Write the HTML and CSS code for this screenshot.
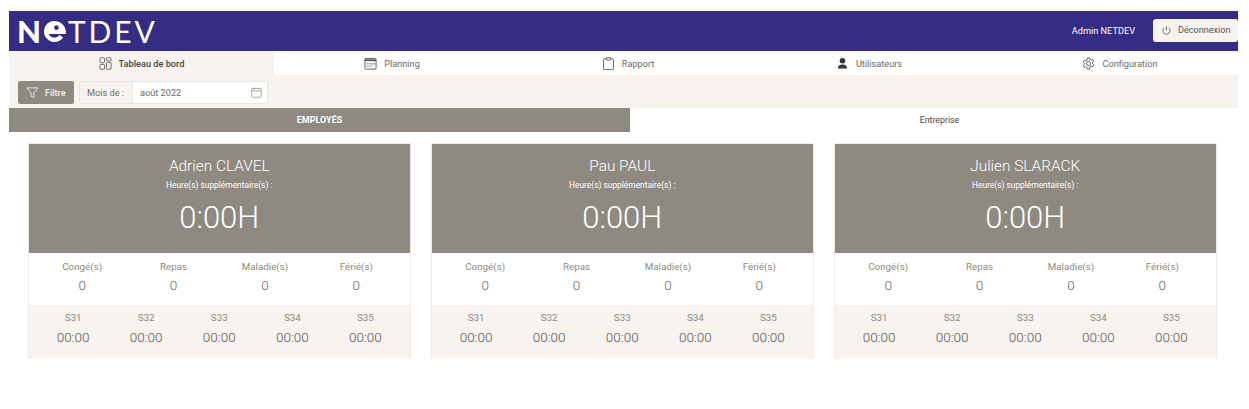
FILE: index.html
```html
<!DOCTYPE html>
<html lang="fr">
<head>
<meta charset="utf-8">
<title>NETDEV</title>
<link rel="stylesheet" href="styles.css">
</head>
<body>
<div class="app">
  <header class="topbar">
    <div class="logo"><span class="logo-n">N</span><svg class="logo-e" viewBox="0 0 24 24" aria-hidden="true"><path d="M12 1a11 11 0 1 0 9 17.3l-3.9-2.6A6.4 6.4 0 0 1 6 14.5h17.6c.3-1 .4-1.8.4-2.5A12 12 0 0 0 12 1z" fill="#fff"/><circle cx="14" cy="8" r="2.4" fill="#352c84"/></svg><span class="logo-rest">TDEV</span></div>
    <div class="user">
      <span class="user-name">Admin NETDEV</span>
      <button class="logout"><svg class="ico-sm" viewBox="0 0 16 16" fill="none" stroke="#444" stroke-width="1.1"><path d="M8 2v6"/><path d="M5 4a5.2 5.2 0 1 0 6 0"/></svg>Déconnexion</button>
    </div>
  </header>
  <nav class="nav">
    <a class="nav-item active"><svg class="ico" viewBox="0 0 14 14" fill="none" stroke="#555" stroke-width=".9"><rect x="1" y=".8" width="5" height="5.4" rx="1.4"/><rect x="8" y=".8" width="5" height="3.4" rx="1"/><rect x="1" y="8" width="5" height="5.2" rx="1"/><rect x="8" y="5.8" width="5" height="7.4" rx="1"/></svg>Tableau de bord</a>
    <a class="nav-item"><svg class="ico" viewBox="0 0 14 14" fill="none" stroke="#555"><rect x="1" y="1.5" width="12" height="11.5" rx="1"/><path d="M1 3.5h12" stroke-width="2"/><path d="M3.5 6.5v4M5.5 6.5v4M7.5 6.5v4M9.5 6.5v3M11 6.5v2" stroke-dasharray="1 .6" stroke-width=".9"/></svg>Planning</a>
    <a class="nav-item"><svg class="ico" viewBox="0 0 14 14" fill="none" stroke="#444" stroke-width=".9"><path d="M4.5 2H2.5a.8.8 0 0 0-.8.8v10a.8.8 0 0 0 .8.8h9a.8.8 0 0 0 .8-.8v-10a.8.8 0 0 0-.8-.8H9.5"/><rect x="4.7" y=".6" width="4.6" height="2.6" rx=".6"/></svg>Rapport</a>
    <a class="nav-item"><svg class="ico" viewBox="0 0 14 14" fill="#333"><circle cx="7" cy="4" r="3"/><path d="M2 12.5c0-2.8 2-4.3 5-4.3s5 1.5 5 4.3z"/></svg>Utilisateurs</a>
    <a class="nav-item shifted"><svg class="ico" viewBox="0 0 14 14" fill="none" stroke="#444" stroke-width=".9"><path d="M5.8 1h2.4l.4 1.7 1.3.6 1.6-.8 1.2 2-1.3 1.2v1.5l1.3 1.2-1.2 2-1.6-.6-1.3.7L8.2 13H5.8l-.4-1.7-1.3-.7-1.6.6-1.2-2 1.3-1.2V6.5L1.3 5.3l1.2-2 1.6.8 1.3-.6z"/><circle cx="7" cy="7" r="2.2"/></svg>Configuration</a>
  </nav>
  <div class="toolbar">
    <button class="filter"><svg class="ico" viewBox="0 0 14 14" fill="none" stroke="#f2f0ec" stroke-width=".9"><path d="M1 2h12L8.5 7.5V12.5L5.5 11V7.5z"/></svg>Filtre</button>
    <div class="month">
      <span class="month-label">Mois de :</span>
      <span class="month-value">août 2022<svg class="ico-cal" viewBox="0 0 12 12" fill="none" stroke="#8e8a81" stroke-width=".8"><rect x=".8" y="1.6" width="10.4" height="9.6" rx="1"/><path d="M.8 4.2h10.4M3.4.6v2M8.6.6v2"/></svg></span>
    </div>
  </div>
  <div class="tabs">
    <div class="tab tab-on">EMPLOYÉS</div>
    <div class="tab tab-off">Entreprise</div>
  </div>
  <main class="cards">
    <section class="card">
      <div class="card-head">
        <div class="name">Adrien CLAVEL</div>
        <div class="extra">Heure(s) supplémentaire(s) :</div>
        <div class="hours">0:00H</div>
      </div>
      <div class="stats">
        <div class="cell"><span class="lab">Congé(s)</span><span class="num">0</span></div>
        <div class="cell"><span class="lab">Repas</span><span class="num">0</span></div>
        <div class="cell"><span class="lab">Maladie(s)</span><span class="num">0</span></div>
        <div class="cell"><span class="lab">Férié(s)</span><span class="num">0</span></div>
      </div>
      <div class="weeks">
        <div class="cell"><span class="lab">S31</span><span class="time">00:00</span></div>
        <div class="cell"><span class="lab">S32</span><span class="time">00:00</span></div>
        <div class="cell"><span class="lab">S33</span><span class="time">00:00</span></div>
        <div class="cell"><span class="lab">S34</span><span class="time">00:00</span></div>
        <div class="cell"><span class="lab">S35</span><span class="time">00:00</span></div>
      </div>
    </section>
    <section class="card">
      <div class="card-head">
        <div class="name">Pau PAUL</div>
        <div class="extra">Heure(s) supplémentaire(s) :</div>
        <div class="hours">0:00H</div>
      </div>
      <div class="stats">
        <div class="cell"><span class="lab">Congé(s)</span><span class="num">0</span></div>
        <div class="cell"><span class="lab">Repas</span><span class="num">0</span></div>
        <div class="cell"><span class="lab">Maladie(s)</span><span class="num">0</span></div>
        <div class="cell"><span class="lab">Férié(s)</span><span class="num">0</span></div>
      </div>
      <div class="weeks">
        <div class="cell"><span class="lab">S31</span><span class="time">00:00</span></div>
        <div class="cell"><span class="lab">S32</span><span class="time">00:00</span></div>
        <div class="cell"><span class="lab">S33</span><span class="time">00:00</span></div>
        <div class="cell"><span class="lab">S34</span><span class="time">00:00</span></div>
        <div class="cell"><span class="lab">S35</span><span class="time">00:00</span></div>
      </div>
    </section>
    <section class="card">
      <div class="card-head">
        <div class="name">Julien SLARACK</div>
        <div class="extra">Heure(s) supplémentaire(s) :</div>
        <div class="hours">0:00H</div>
      </div>
      <div class="stats">
        <div class="cell"><span class="lab">Congé(s)</span><span class="num">0</span></div>
        <div class="cell"><span class="lab">Repas</span><span class="num">0</span></div>
        <div class="cell"><span class="lab">Maladie(s)</span><span class="num">0</span></div>
        <div class="cell"><span class="lab">Férié(s)</span><span class="num">0</span></div>
      </div>
      <div class="weeks">
        <div class="cell"><span class="lab">S31</span><span class="time">00:00</span></div>
        <div class="cell"><span class="lab">S32</span><span class="time">00:00</span></div>
        <div class="cell"><span class="lab">S33</span><span class="time">00:00</span></div>
        <div class="cell"><span class="lab">S34</span><span class="time">00:00</span></div>
        <div class="cell"><span class="lab">S35</span><span class="time">00:00</span></div>
      </div>
    </section>
  </main>
</div>
</body>
</html>
```

FILE: styles.css
```css
* { box-sizing: border-box; }
html, body { margin: 0; background: #fff; }
body { font-family: Roboto, "Liberation Sans", sans-serif; color: #555; }
.app { margin: 11px 11px 0 9px; }

.topbar {
  height: 40px;
  background: #352c84;
  display: flex;
  align-items: center;
  justify-content: space-between;
}
.logo {
  display: flex;
  align-items: center;
  padding-left: 8px;
  color: #fff;
  font-family: Lato, sans-serif;
  font-size: 30px;
  line-height: 1;
}
.logo-n { font-weight: 900; margin-right: 2px; font-size: 31px; }
.logo-e { width: 23px; height: 23px; margin-right: 2px; }
.logo-rest { letter-spacing: 2.9px; font-weight: 400; }
.user { display: flex; align-items: center; gap: 18px; margin-bottom: 2px; font-size: 9.2px; color: #fff; }
.user-name { font-weight: 400; }
.logout {
  display: flex;
  align-items: center;
  gap: 6px;
  width: 85px;
  height: 23px;
  padding: 0 0 0 8px;
  border: 0;
  border-radius: 3px;
  background: #f7f4ef;
  color: #555;
  font: 400 9.1px Roboto, sans-serif;
}
.ico-sm { width: 11px; height: 11px; }

.nav {
  height: 24px;
  display: grid;
  grid-template-columns: 265px 236px 236px 246px 246px;
  background: #fff;
  font-size: 9.2px;
  color: #6b6b6b;
}
.nav-item { display: flex; align-items: center; justify-content: center; gap: 7px; }
.nav-item.active { background: #f7f4ef; color: #444; font-weight: 500; }
.nav-item.shifted { padding-left: 10px; }
.ico { width: 13px; height: 13px; }

.toolbar {
  height: 33px;
  background: #f7f4ef;
  display: flex;
  align-items: flex-start;
  gap: 5px;
  padding: 6px 0 0 9px;
}
.filter {
  display: flex;
  align-items: center;
  gap: 6px;
  width: 56px;
  height: 23px;
  padding: 0 0 0 8px;
  border: 0;
  border-radius: 2px;
  background: #8e8a81;
  color: #f7f4ef;
  font: 500 9px Roboto, sans-serif;
}
.month {
  display: flex;
  width: 189px;
  height: 23px;
  border: 1px solid #e6e6e6;
  border-radius: 3px;
  font-size: 9.2px;
  overflow: hidden;
}
.month-label { width: 53px; display: flex; align-items: center; padding-left: 7px; color: #6b6b6b; border-right: 1px solid #eaeaea; }
.month-value { flex: 1; display: flex; align-items: center; justify-content: space-between; padding: 0 5px 0 7px; background: #fff; color: #6b6b6b; }
.ico-cal { width: 11px; height: 11px; }

.tabs { height: 24px; display: grid; grid-template-columns: 621px 1fr; font-size: 9px; }
.tab { display: flex; align-items: center; justify-content: center; background: #fff; color: #444; }
.tab-off { padding-left: 11px; font-size: 8.8px; }
.tab-on { background: #8e8a81; color: #fff; font-weight: 700; }

.cards {
  display: grid;
  grid-template-columns: repeat(3, 383.5px);
  gap: 19.5px;
  padding: 11px 0 0 18.5px;
}
.card { border: 1px solid #efebe4; height: 215px; display: flex; flex-direction: column; }
.card-head {
  height: 109px;
  background: #8e8a81;
  color: #fff;
  text-align: center;
  padding-top: 13px;
}
.name { font-size: 15.4px; font-weight: 300; line-height: 19px; }
.extra { font-size: 8.4px; font-weight: 400; line-height: 12px; margin-top: 3px; }
.hours { font-size: 31px; font-weight: 300; line-height: 36px; margin-top: 9px; }
.stats { height: 52px; display: grid; grid-template-columns: repeat(4, 1fr); padding: 7px 8px 0; background: #fff; }
.weeks { flex: 1; display: grid; grid-template-columns: repeat(5, 1fr); padding: 6px 8px 0; background: #f7f4ef; }
.cell { display: flex; flex-direction: column; align-items: center; }
.lab { font-size: 9.8px; line-height: 14px; color: #8e8a81; }
.num { font-size: 13.5px; font-weight: 300; line-height: 18px; margin-top: 2px; color: #666; }
.time { font-size: 13.5px; font-weight: 300; line-height: 18px; margin-top: 3px; color: #555; }
```
